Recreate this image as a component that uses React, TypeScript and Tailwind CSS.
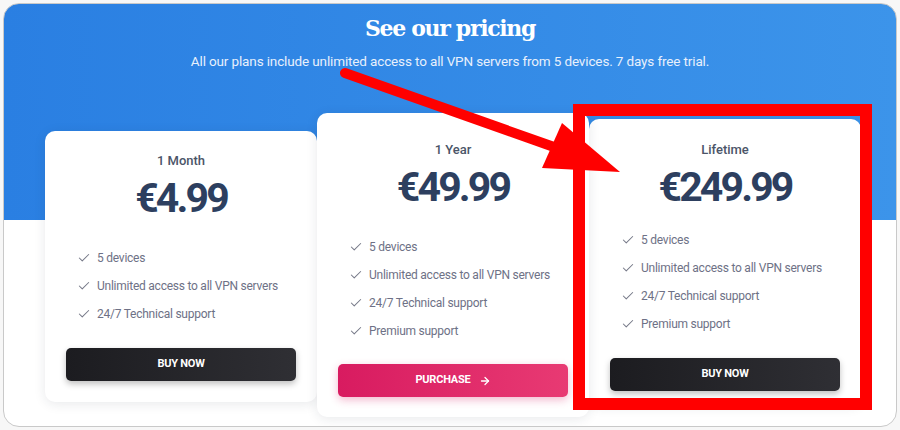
import { Check, ArrowRight } from "lucide-react";

type Plan = {
    name: string;
    price: string;
    features: string[];
    card: string;
    titleTop: string;
    listTop: string;
    button: "dark" | "pink";
    label: string;
};

const plans: Plan[] = [
    {
        name: "1 Month",
        price: "€4.99",
        features: ["5 devices", "Unlimited access to all VPN servers", "24/7 Technical support"],
        card: "mt-[18px] pb-[21px]",
        titleTop: "pt-[20px]",
        listTop: "mt-[26px]",
        button: "dark",
        label: "BUY NOW",
    },
    {
        name: "1 Year",
        price: "€49.99",
        features: [
            "5 devices",
            "Unlimited access to all VPN servers",
            "24/7 Technical support",
            "Premium support",
        ],
        card: "mt-0 pb-[20px] z-10",
        titleTop: "pt-[27px]",
        listTop: "mt-[26px]",
        button: "pink",
        label: "PURCHASE",
    },
    {
        name: "Lifetime",
        price: "€249.99",
        features: [
            "5 devices",
            "Unlimited access to all VPN servers",
            "24/7 Technical support",
            "Premium support",
        ],
        card: "mt-[6px] pb-[14px]",
        titleTop: "pt-[21px]",
        listTop: "mt-[19px]",
        button: "dark",
        label: "BUY NOW",
    },
];

function PlanCard({ plan }: { plan: Plan }) {
    return (
        <div
            className={`relative flex w-[272px] shrink-0 flex-col rounded-[10px] bg-white px-[21px] shadow-[0_2px_12px_rgba(30,40,60,0.10)] ${plan.card}`}
        >
            <div className={`text-center text-[13px] leading-[20px] font-medium text-[#4b5568] ${plan.titleTop}`}>
                {plan.name}
            </div>
            <div className="mt-[3px] text-center text-[41px] leading-[48px] font-bold tracking-[-0.07em] text-[#2d3f5f]">
                {plan.price}
            </div>

            <ul className={`flex flex-col gap-[8px] pl-[11px] ${plan.listTop}`}>
                {plan.features.map((f) => (
                    <li
                        key={f}
                        className="flex items-center gap-[6px] text-[12px] leading-[20px] tracking-[-0.02em] whitespace-nowrap text-[#6e7186]"
                    >
                        <Check size={14} strokeWidth={1.8} className="text-[#767988]" />
                        <span>{f}</span>
                    </li>
                ))}
            </ul>

            {plan.button === "dark" ? (
                <button className="mt-[24px] flex h-[33px] w-full items-center justify-center rounded-[5px] bg-[linear-gradient(90deg,#1c1c20,#2f2f34)] text-[11px] font-bold tracking-[-0.02em] text-white shadow-[0_3px_6px_rgba(0,0,0,0.25)]">
                    {plan.label}
                </button>
            ) : (
                <button className="mt-[23px] flex h-[33px] w-full items-center justify-center gap-[8px] rounded-[5px] bg-[linear-gradient(90deg,#d81b60,#e83a73)] text-[11px] font-bold tracking-[-0.02em] text-white shadow-[0_3px_8px_rgba(216,27,96,0.3)]">
                    {plan.label}
                    <ArrowRight size={12} strokeWidth={2.6} />
                </button>
            )}
        </div>
    );
}

export default function App() {
    return (
        <div className="relative h-[430px] w-[900px] bg-[#f7f7f7] p-[3px] font-['Roboto',sans-serif]">
            <div className="h-[424px] w-[894px] overflow-hidden rounded-[16px] border border-[#c9c9c9] bg-white bg-[linear-gradient(90deg,#2a7fe2,#3c94ea)] bg-[length:100%_216px] bg-no-repeat">
                <h1 className="pt-[8px] text-center font-['DejaVu_Serif',serif] text-[22px] leading-[32px] font-bold tracking-[-0.06em] text-white">
                    See our pricing
                </h1>
                <p className="mt-[7px] text-center text-[13.5px] leading-[20px] tracking-[-0.01em] text-[#e8f0fc]">
                    All our plans include unlimited access to all VPN servers from 5 devices. 7 days free trial.
                </p>

                <div className="mt-[42px] flex items-start pl-[41px]">
                    {plans.map((p) => (
                        <PlanCard key={p.name} plan={p} />
                    ))}
                </div>
            </div>

            {/* red annotation */}
            <svg
                className="pointer-events-none absolute top-0 left-0 z-20"
                width={900}
                height={430}
                viewBox="0 0 900 430"
            >
                <rect x={579} y={110} width={287} height={294} fill="none" stroke="#ff0000" strokeWidth={12} />
                <line x1={345} y1={73} x2={554} y2={147} stroke="#ff0000" strokeWidth={10} strokeLinecap="round" />
                <polygon points="620,172 562,123 542,168" fill="#ff0000" />
            </svg>
        </div>
    );
}
